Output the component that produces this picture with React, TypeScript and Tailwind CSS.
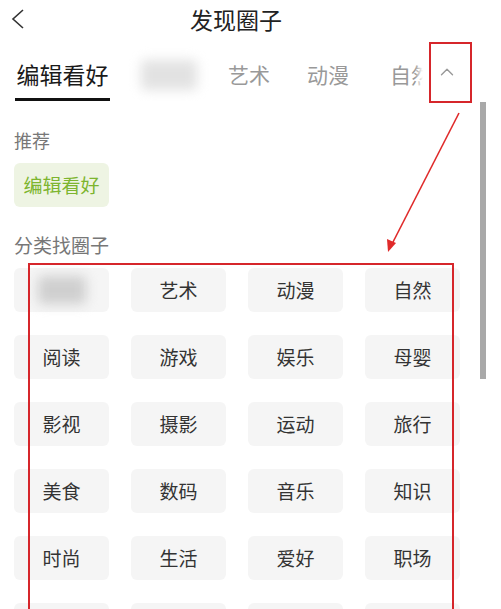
import { ChevronUp } from 'lucide-react';

const categories: string[] = [
  '', '艺术', '动漫', '自然',
  '阅读', '游戏', '娱乐', '母婴',
  '影视', '摄影', '运动', '旅行',
  '美食', '数码', '音乐', '知识',
  '时尚', '生活', '爱好', '职场',
  '', '', '', '',
];

const DiscoverCircles = () => {
  return (
    <div
      className="relative w-[501px] h-[609px] overflow-hidden bg-white"
      style={{ fontFamily: '"Noto Sans CJK SC", "Noto Sans", sans-serif' }}
    >
      {/* Header */}
      <div className="h-[38px] flex items-center pl-[10px]">
        <svg width="16" height="22" viewBox="0 0 16 22" className="text-[#333]">
          <polyline points="13,2 3,11 13,20" fill="none" stroke="currentColor" strokeWidth="1.6" />
        </svg>
        <h1 className="ml-[164px] text-[23px] leading-[30px] text-[#222]">发现圈子</h1>
      </div>

      {/* Tabs */}
      <div className="h-[64px] flex items-start">
        <div className="relative w-[423px] overflow-hidden pl-[15px] pt-[21px]">
          <div className="flex items-start gap-[31px] whitespace-nowrap">
            <div className="flex shrink-0 flex-col items-center">
              <span className="text-[23px] leading-[30px] text-[#1a1a1a]">编辑看好</span>
              <div className="mt-[9px] h-[3px] w-[95px] bg-[#111]" />
            </div>
            <div className="mt-[1px] h-[30px] w-[56px] shrink-0 rounded bg-[#e2e2e2] blur-[6px]" />
            <span className="shrink-0 text-[21px] leading-[30px] text-[#999]">艺术</span>
            <span className="ml-[6px] shrink-0 text-[21px] leading-[30px] text-[#999]">动漫</span>
            <span className="ml-[10px] shrink-0 text-[21px] leading-[30px] text-[#999]">自然</span>
          </div>
          <div className="absolute right-0 top-0 h-full w-[8px] bg-gradient-to-r from-white/0 to-white" />
        </div>
        <div className="w-[48px] h-[60px] flex items-center justify-center pt-[8px]">
          <ChevronUp className="w-[22px] h-[22px] text-[#999]" strokeWidth={1.5} />
        </div>
      </div>

      {/* Content */}
      <div className="pl-[14px]">
        <p className="mt-[26px] text-[18px] leading-[24px] text-[#777]">推荐</p>
        <div className="mt-[11px] w-[95px] h-[44px] rounded-md bg-[#eef4e3] flex items-center justify-center text-[19px] text-[#7db52f]">
          编辑看好
        </div>
        <p className="mt-[26px] text-[19px] leading-[24px] text-[#777]">分类找圈子</p>
        <div className="mt-[11px] grid grid-cols-[repeat(4,95px)] gap-x-[22px] gap-y-[23px]">
          {categories.map((name, index) => (
            <div
              key={index}
              className="h-[44px] rounded-md bg-[#f5f5f5] flex items-center justify-center text-[19px] text-[#333]"
            >
              {index === 0 ? (
                <div className="h-[28px] w-[48px] rounded bg-[#cfcfcf] blur-[6px]" />
              ) : (
                name
              )}
            </div>
          ))}
        </div>
      </div>

      {/* Scrollbar */}
      <div className="absolute left-[480px] top-[102px] w-[6px] h-[277px] bg-[#a9a9a9]" />

      {/* Annotations */}
      <div className="absolute left-[429px] top-[42px] w-[43px] h-[61px] border-2 border-[#d6262b]" />
      <div className="absolute left-[28px] top-[263px] w-[426px] h-[400px] border-2 border-[#d6262b]" />
      <svg className="absolute left-0 top-0 pointer-events-none" width="501" height="609">
        <line x1="459" y1="113" x2="392" y2="244" stroke="#e02a2a" strokeWidth="1.6" />
        <polygon points="388,252 387,239 396,243" fill="#e02a2a" />
      </svg>
    </div>
  );
};

export default function App() {
  return <DiscoverCircles />;
}
